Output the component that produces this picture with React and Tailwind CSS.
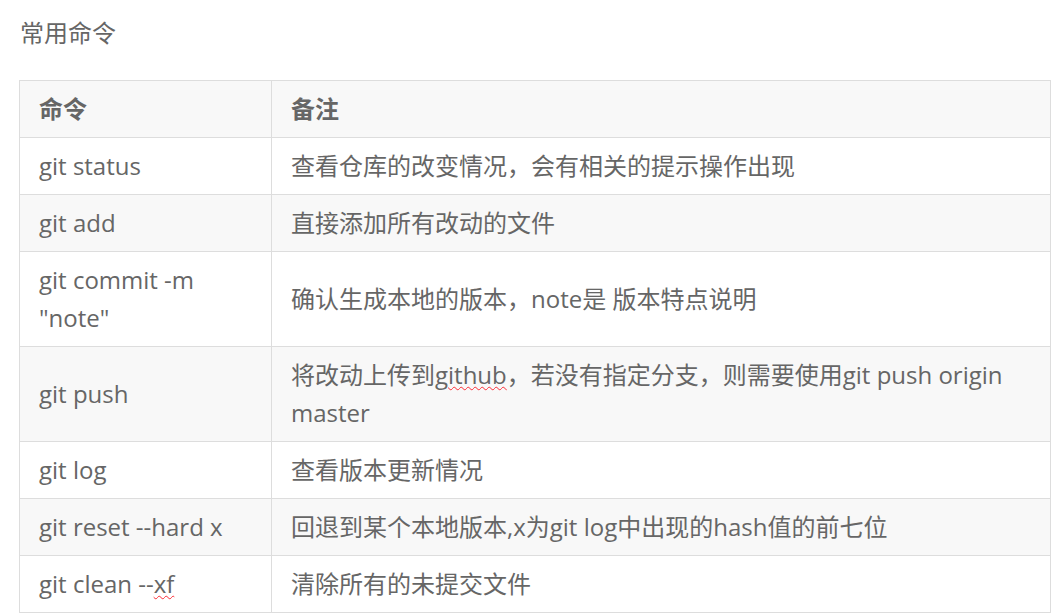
const rows = [
    { cmd: 'git status', note: '查看仓库的改变情况，会有相关的提示操作出现' },
    { cmd: 'git add', note: '直接添加所有改动的文件' },
    { cmd: 'git commit -m "note"', note: '确认生成本地的版本，note是 版本特点说明' },
    {
        cmd: 'git push',
        note: (
            <>
                将改动上传到<span className="underline decoration-wavy decoration-red-500 decoration-1 underline-offset-2">github</span>，若没有指定分支，则需要使用git push origin master
            </>
        ),
    },
    { cmd: 'git log', note: '查看版本更新情况' },
    { cmd: 'git reset --hard x', note: '回退到某个本地版本,x为git log中出现的hash值的前七位' },
    {
        cmd: (
            <>
                git clean --<span className="underline decoration-wavy decoration-red-500 decoration-1 underline-offset-2">xf</span>
            </>
        ),
        note: '清除所有的未提交文件',
    },
];

export default function App() {
    return (
        <div
            className="min-h-screen bg-white px-[19px] pt-[14px] text-[24px] leading-[38px] text-[#666]"
            style={{ fontFamily: '"Open Sans", "Noto Sans CJK SC", sans-serif' }}
        >
            <p className="mb-[28px] pl-px">常用命令</p>

            <table className="w-[1032px] border-collapse border border-[#ddd]">
                <thead>
                    <tr className="bg-[#f8f8f8]">
                        <th className="w-[252px] border border-[#ddd] pl-[19px] pr-[20px] py-[9px] text-left font-bold">命令</th>
                        <th className="border border-[#ddd] pl-[19px] pr-[20px] py-[9px] text-left font-bold">备注</th>
                    </tr>
                </thead>
                <tbody>
                    {rows.map((row, i) => (
                        <tr key={i} className={i % 2 === 1 ? 'bg-[#f8f8f8]' : 'bg-white'}>
                            <td className="border border-[#ddd] pl-[19px] pr-[20px] py-[9px] align-middle">{row.cmd}</td>
                            <td className="border border-[#ddd] pl-[19px] pr-[20px] py-[9px] align-middle">{row.note}</td>
                        </tr>
                    ))}
                </tbody>
            </table>
        </div>
    );
}
